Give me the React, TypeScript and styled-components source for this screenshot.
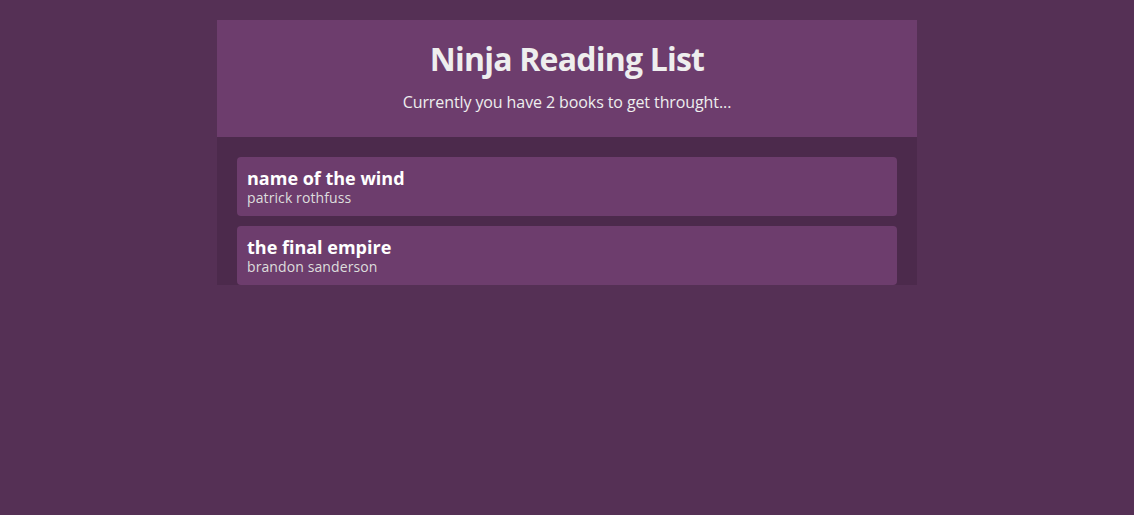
import React from "react";
import styled, { createGlobalStyle } from "styled-components";

const Global = createGlobalStyle`
  body {
    margin: 0;
    background: #553055;
    font-family: "Open Sans", "Noto Sans", sans-serif;
  }
`;

const AppShell = styled.div`
  background: #4c2a4c;
  margin: 20px auto;
  width: 90%;
  max-width: 700px;
  color: #eee;
`;

const Navbar = styled.header`
  padding: 10px 20px;
  text-align: center;
  background: #6d3d6d;
`;

const Title = styled.h1`
  margin: 10px 0;
  font-size: 32px;
  line-height: 37px;
  font-weight: 700;
  letter-spacing: -0.8px;
`;

const Subtitle = styled.p`
  margin: 16px 0;
  font-size: 16px;
  line-height: 18px;
  letter-spacing: -0.1px;
`;

const BookList = styled.ul`
  list-style: none;
  margin: 0;
  padding: 20px 20px 0;
  display: flex;
  flex-direction: column;
  gap: 10px;
`;

const BookItem = styled.li`
  background: #6d3d6d;
  border-radius: 4px;
  padding: 10px;
  cursor: pointer;
  display: flex;
  flex-direction: column;
`;

const BookTitle = styled.div`
  font-weight: 700;
  color: #fff;
  font-size: 18px;
  line-height: 22px;
  letter-spacing: 0;
`;

const BookAuthor = styled.div`
  font-size: 14px;
  line-height: 17px;
  color: #ddd;
  letter-spacing: 0.1px;
`;

const books = [
  { title: "name of the wind", author: "patrick rothfuss" },
  { title: "the final empire", author: "brandon sanderson" },
];

export default function App() {
  return (
    <>
      <Global />
      <AppShell>
        <Navbar>
          <Title>Ninja Reading List</Title>
          <Subtitle>Currently you have {books.length} books to get throught...</Subtitle>
        </Navbar>
        <BookList>
          {books.map((b) => (
            <BookItem key={b.title}>
              <BookTitle>{b.title}</BookTitle>
              <BookAuthor>{b.author}</BookAuthor>
            </BookItem>
          ))}
        </BookList>
      </AppShell>
    </>
  );
}
